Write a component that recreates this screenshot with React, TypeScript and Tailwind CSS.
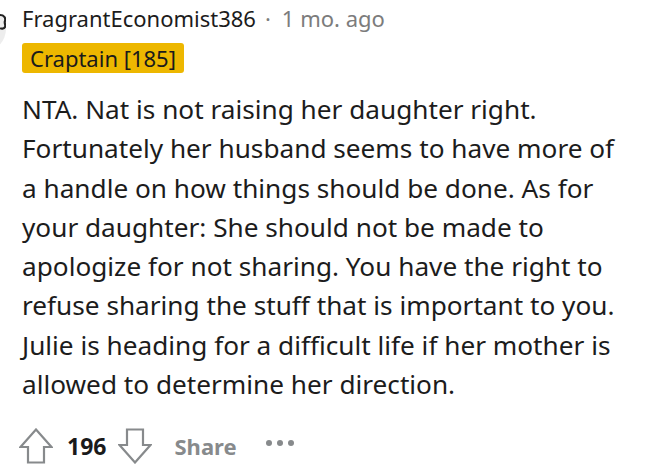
import React from 'react';

const BODY_LINES = [
  'NTA. Nat is not raising her daughter right.',
  'Fortunately her husband seems to have more of',
  'a handle on how things should be done. As for',
  'your daughter: She should not be made to',
  'apologize for not sharing. You have the right to',
  'refuse sharing the stuff that is important to you.',
  'Julie is heading for a difficult life if her mother is',
  'allowed to determine her direction.',
];

function UpArrow() {
  return (
    <svg width="34" height="36" viewBox="0 0 34 36" fill="none">
      <path
        d="M17 1.5 L32.5 19 L25 19 L25 34.5 L9 34.5 L9 19 L1.5 19 Z"
        stroke="#878a8c"
        strokeWidth="2.2"
        strokeLinejoin="miter"
      />
    </svg>
  );
}

function DownArrow() {
  return (
    <svg width="34" height="36" viewBox="0 0 34 36" fill="none">
      <path
        d="M17 34.5 L32.5 17 L25 17 L25 1.5 L9 1.5 L9 17 L1.5 17 Z"
        stroke="#878a8c"
        strokeWidth="2.2"
        strokeLinejoin="miter"
      />
    </svg>
  );
}

function Avatar() {
  return (
    <svg width="46" height="46" viewBox="0 0 46 46" className="shrink-0">
      <circle cx="23" cy="23" r="23" fill="#ededed" />
      <path d="M40 9 C44 9 46 12 45 15 C44 17 46 19 45 21 C44 23 41 23 40 22" fill="none" stroke="#222" strokeWidth="2.2" />
    </svg>
  );
}

export default function App() {
  return (
    <div className="w-[661px] h-[470px] overflow-hidden bg-white font-['Noto_Sans',sans-serif] text-[#1c1c1c]">
      <div className="flex pt-[4px]">
        <div className="ml-[-40px] mr-[16px] mt-[2px]">
          <Avatar />
        </div>
        <div className="flex flex-col">
          <div className="flex items-baseline text-[22px] leading-[28px] whitespace-nowrap">
            <span className="text-[#1c1c1c]">FragrantEconomist386</span>
            <span className="text-[#7c7c7c] ml-[9px]">·</span>
            <span className="text-[#7c7c7c] ml-[11px]">1 mo. ago</span>
          </div>
          <div className="mt-[11px] flex">
            <span className="bg-[#edb700] text-[#1a1a1b] text-[22px] leading-[30px] px-[8px] rounded-[3px] whitespace-nowrap">
              Craptain [185]
            </span>
          </div>
        </div>
      </div>

      <div className="pl-[22px] mt-[17px] text-[26.2px] leading-[39.3px] whitespace-nowrap">
        {BODY_LINES.map((line) => (
          <div key={line}>{line}</div>
        ))}
      </div>

      <div className="flex items-center pl-[19px] mt-[24px] text-[#878a8c]">
        <UpArrow />
        <span className="ml-[14px] text-[23px] font-bold text-[#1a1a1b]">196</span>
        <span className="ml-[12px]">
          <DownArrow />
        </span>
        <span className="ml-[22px] text-[22px] font-bold">Share</span>
        <span className="ml-[29px] flex gap-[5px] mt-[-6px]">
          <span className="w-[6px] h-[6px] rounded-full bg-[#878a8c]" />
          <span className="w-[6px] h-[6px] rounded-full bg-[#878a8c]" />
          <span className="w-[6px] h-[6px] rounded-full bg-[#878a8c]" />
        </span>
      </div>
    </div>
  );
}
